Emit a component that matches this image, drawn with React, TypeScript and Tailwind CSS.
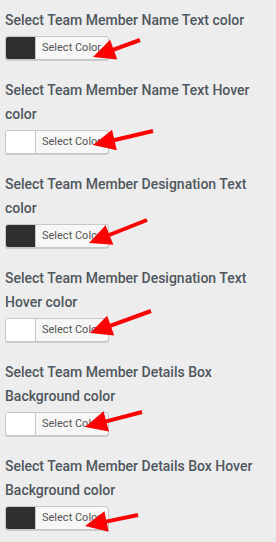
import React from "react";

type Item = { label: string; dark: boolean };

const items: Item[] = [
  { label: "Select Team Member Name Text color", dark: true },
  { label: "Select Team Member Name Text Hover color", dark: false },
  { label: "Select Team Member Designation Text color", dark: true },
  { label: "Select Team Member Designation Text Hover color", dark: false },
  { label: "Select Team Member Details Box Background color", dark: false },
  { label: "Select Team Member Details Box Hover Background color", dark: true },
];

type Arrow = { tip: [number, number]; tail: [number, number] };

const arrows: Arrow[] = [
  { tip: [93, 57], tail: [140, 40] },
  { tip: [93, 145], tail: [153, 131] },
  { tip: [89, 243], tail: [147, 220] },
  { tip: [90, 333], tail: [151, 311] },
  { tip: [85, 427], tail: [142, 412] },
  { tip: [85, 526], tail: [138, 515] },
];

function ArrowShape({ tip, tail }: Arrow) {
  const [tx, ty] = tip;
  const [sx, sy] = tail;
  const dx = sx - tx;
  const dy = sy - ty;
  const len = Math.hypot(dx, dy);
  const ux = dx / len;
  const uy = dy / len;
  const L = 22;
  const W = 10.5;
  const bx = tx + ux * L;
  const by = ty + uy * L;
  const nx = -uy;
  const ny = ux;
  const p1 = `${tx},${ty}`;
  const p2 = `${bx + nx * W},${by + ny * W}`;
  const p3 = `${bx - nx * W},${by - ny * W}`;
  return (
    <g>
      <line
        x1={bx - ux * 3}
        y1={by - uy * 3}
        x2={sx}
        y2={sy}
        stroke="#ff0000"
        strokeWidth={4}
        strokeLinecap="butt"
      />
      <polygon points={`${p1} ${p2} ${p3}`} fill="#ff0000" />
    </g>
  );
}

export default function App() {
  return (
    <div
      className="relative min-h-screen w-[276px] bg-[#ededed] pl-[5px] pt-[8px]"
      style={{ fontFamily: "Roboto, 'Liberation Sans', sans-serif" }}
    >
      <div className="flex w-[262px] flex-col gap-[18px]">
        {items.map((it) => (
          <div key={it.label} className="flex flex-col">
            <p className="text-[14px] font-medium leading-6 text-[#50575e]">{it.label}</p>
            <button
              type="button"
              className="mt-1 flex h-6 w-[104px] items-stretch overflow-hidden rounded-[3px] border border-[#c7c7c7] bg-[#f7f7f7] p-0 shadow-[0_1px_0_#cccccc]"
            >
              <span
                className={
                  it.dark
                    ? "w-[30px] border-r border-[#c7c7c7] bg-[#2f2f2f]"
                    : "w-[30px] border-r border-[#c7c7c7] bg-white"
                }
              />
              <span className="flex items-center pl-[6px] text-[11px] text-[#555555]">Select Color</span>
            </button>
          </div>
        ))}
      </div>
      <svg
        className="pointer-events-none absolute left-0 top-0"
        width={276}
        height={542}
        viewBox="0 0 276 542"
      >
        {arrows.map((a, i) => (
          <ArrowShape key={i} tip={a.tip} tail={a.tail} />
        ))}
      </svg>
    </div>
  );
}
